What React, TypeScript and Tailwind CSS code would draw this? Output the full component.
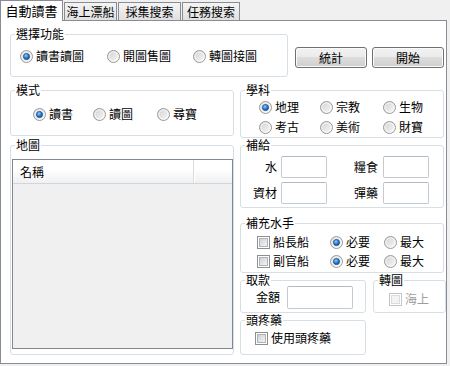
import React from "react";

// Win7 style form: 自動讀書 tab

const Radio = ({ checked, label }: { checked?: boolean; label: string }) => (
  <span className="flex items-center gap-[3px] h-[16px] whitespace-nowrap">
    <svg width="13" height="13" viewBox="0 0 13 13" className="shrink-0">
      <circle cx="6.5" cy="6.5" r="6" fill="url(#radioBg)" stroke="#9a9a9a" />
      <circle cx="6.5" cy="6.5" r="4.6" fill="none" stroke="#ffffff" strokeOpacity="0.7" />
      {checked && (
        <circle cx="6.5" cy="6.5" r="3.1" fill="url(#radioDot)" stroke="#174a8a" strokeWidth="0.7" />
      )}
    </svg>
    <span>{label}</span>
  </span>
);

const Check = ({ label, disabled }: { label: string; disabled?: boolean }) => (
  <span className={`flex items-center gap-[3px] h-[16px] whitespace-nowrap ${disabled ? "text-[#9d9d9d]" : ""}`}>
    <svg width="13" height="13" viewBox="0 0 13 13" className="shrink-0">
      <rect x="0.5" y="0.5" width="12" height="12" fill="#ffffff" stroke={disabled ? "#c4c4c4" : "#8e8f8f"} />
      <rect
        x="2.5"
        y="2.5"
        width="8"
        height="8"
        fill={disabled ? "#f3f3f3" : "url(#checkBg)"}
        stroke={disabled ? "#dcdcdc" : "#aeb3b9"}
      />
    </svg>
    <span>{label}</span>
  </span>
);

const Group = ({
  title,
  className,
  children,
}: {
  title: string;
  className: string;
  children?: React.ReactNode;
}) => (
  <div className={`relative border border-[#d5dfe5] rounded-[3px] shrink-0 ${className}`}>
    <span className="absolute left-[4px] top-[-8px] bg-white px-px leading-[14px] whitespace-nowrap">{title}</span>
    {children}
  </div>
);

const Button = ({ children }: { children: React.ReactNode }) => (
  <button className="w-[72px] h-[21px] border border-[#707070] rounded-[3px] bg-[linear-gradient(#f2f2f2_0%,#ebebeb_50%,#dddddd_50%,#cfcfcf_100%)] shadow-[inset_0_0_0_1px_#fbfbfb] flex items-center justify-center leading-[14px]">
    {children}
  </button>
);

const TextBox = ({ className }: { className: string }) => (
  <div className={`h-[22px] border border-[#c6cad0] border-t-[#b5b9bf] rounded-[2px] bg-white shrink-0 ${className}`} />
);

export default function App() {
  return (
    <div className="w-[450px] h-[366px] bg-[#f0f0f0] text-[12px] leading-[14px] text-black font-['Noto_Sans_CJK_TC','Noto_Sans_CJK_SC',sans-serif]">
      <svg className="w-0 h-0 overflow-hidden">
        <defs>
          <linearGradient id="radioBg" x1="0" y1="0" x2="1" y2="1">
            <stop offset="0" stopColor="#d0d0d0" />
            <stop offset="1" stopColor="#fafafa" />
          </linearGradient>
          <radialGradient id="radioDot" cx="0.4" cy="0.35" r="0.7">
            <stop offset="0" stopColor="#8fd0ff" />
            <stop offset="0.6" stopColor="#2673c9" />
            <stop offset="1" stopColor="#14468e" />
          </radialGradient>
          <linearGradient id="checkBg" x1="0" y1="0" x2="1" y2="1">
            <stop offset="0" stopColor="#cbcfd5" />
            <stop offset="1" stopColor="#f6f6f6" />
          </linearGradient>
        </defs>
      </svg>

      {/* Tabs */}
      <div className="relative z-10 -mb-px flex items-end h-[21px]">
        <div className="h-[21px] w-[63px] bg-white border border-b-0 border-[#898c95] flex items-center justify-center text-[13px]">
          自動讀書
        </div>
        <div className="ml-px h-[19px] w-[53px] border border-[#898c95] bg-gradient-to-b from-[#f4f4f4] to-[#e0e0e0] flex items-center justify-center">
          海上漂船
        </div>
        <div className="ml-px h-[19px] w-[63px] border border-[#898c95] bg-gradient-to-b from-[#f4f4f4] to-[#e0e0e0] flex items-center justify-center">
          採集搜索
        </div>
        <div className="ml-px h-[19px] w-[58px] border border-[#898c95] bg-gradient-to-b from-[#f4f4f4] to-[#e0e0e0] flex items-center justify-center">
          任務搜索
        </div>
      </div>

      {/* Tab page */}
      <div className="w-[447px] h-[344px] border border-[#898c95] bg-white pl-[9px] pt-[13px] flex flex-col">
        <div className="flex">
          <Group title="選擇功能" className="w-[278px] h-[43px] pl-[9px] pt-[13px] flex">
            <div className="w-[87px]">
              <Radio checked label="讀書讀圖" />
            </div>
            <div className="w-[86px]">
              <Radio label="開圖售圖" />
            </div>
            <Radio label="轉圖接圖" />
          </Group>
          <div className="ml-[7px] mt-[13px] flex gap-[5px]">
            <Button>統計</Button>
            <Button>開始</Button>
          </div>
        </div>

        <div className="mt-[13px] flex gap-[6px]">
          {/* left column */}
          <div className="w-[224px] flex flex-col">
            <Group title="模式" className="h-[46px] pt-[15px] pl-[22px] flex">
              <div className="w-[60px]">
                <Radio checked label="讀書" />
              </div>
              <div className="w-[64px]">
                <Radio label="讀圖" />
              </div>
              <Radio label="尋寶" />
            </Group>
            <Group title="地圖" className="mt-[9px] h-[210px] pt-[13px] pl-px">
              <div className="w-[221px] h-[190px] border border-[#828790] bg-[#f0f0f0] flex flex-col">
                <div className="h-[24px] flex bg-gradient-to-b from-white from-40% to-[#eef0f2] border-b border-[#d5d5d5]">
                  <div className="w-[181px] pl-[7px] flex items-center border-r border-[#dcdcdc]">名稱</div>
                  <div className="w-px bg-white" />
                </div>
              </div>
            </Group>
          </div>

          {/* right column */}
          <div className="w-[204px] flex flex-col">
            <Group title="學科" className="h-[48px] pt-[8px] pl-[18px] flex flex-col gap-[4px]">
              <div className="flex">
                <div className="w-[61px]">
                  <Radio checked label="地理" />
                </div>
                <div className="w-[63px]">
                  <Radio label="宗教" />
                </div>
                <Radio label="生物" />
              </div>
              <div className="flex">
                <div className="w-[61px]">
                  <Radio label="考古" />
                </div>
                <div className="w-[63px]">
                  <Radio label="美術" />
                </div>
                <Radio label="財寶" />
              </div>
            </Group>

            <Group title="補給" className="mt-[7px] h-[63px] pt-[10px] flex flex-col gap-[4px]">
              <div className="flex items-center">
                <span className="w-[36px] text-right">水</span>
                <TextBox className="ml-[4px] w-[46px]" />
                <span className="w-[51px] text-right">糧食</span>
                <TextBox className="ml-[5px] w-[46px]" />
              </div>
              <div className="flex items-center">
                <span className="w-[36px] text-right">資材</span>
                <TextBox className="ml-[4px] w-[46px]" />
                <span className="w-[51px] text-right">彈藥</span>
                <TextBox className="ml-[5px] w-[46px]" />
              </div>
            </Group>

            <Group title="補充水手" className="mt-[15px] h-[50px] pt-[10px] pl-[16px] flex flex-col gap-[3px]">
              <div className="flex">
                <div className="w-[73px]">
                  <Check label="船長船" />
                </div>
                <div className="w-[54px]">
                  <Radio checked label="必要" />
                </div>
                <Radio label="最大" />
              </div>
              <div className="flex">
                <div className="w-[73px]">
                  <Check label="副官船" />
                </div>
                <div className="w-[54px]">
                  <Radio checked label="必要" />
                </div>
                <Radio label="最大" />
              </div>
            </Group>

            <div className="mt-[7px] flex">
              <Group title="取款" className="w-[126px] h-[33px] pl-[15px] pt-[5px] flex items-start">
                <span className="h-[22px] flex items-center">金額</span>
                <TextBox className="ml-[7px] w-[66px] h-[23px]" />
              </Group>
              <Group title="轉圖" className="ml-[7px] w-[73px] h-[33px] pl-[15px] pt-[10px]">
                <Check disabled label="海上" />
              </Group>
            </div>

            <Group title="頭疼藥" className="mt-[7px] w-[126px] h-[35px] pl-[14px] pt-[9px]">
              <Check label="使用頭疼藥" />
            </Group>
          </div>
        </div>
      </div>
    </div>
  );
}
